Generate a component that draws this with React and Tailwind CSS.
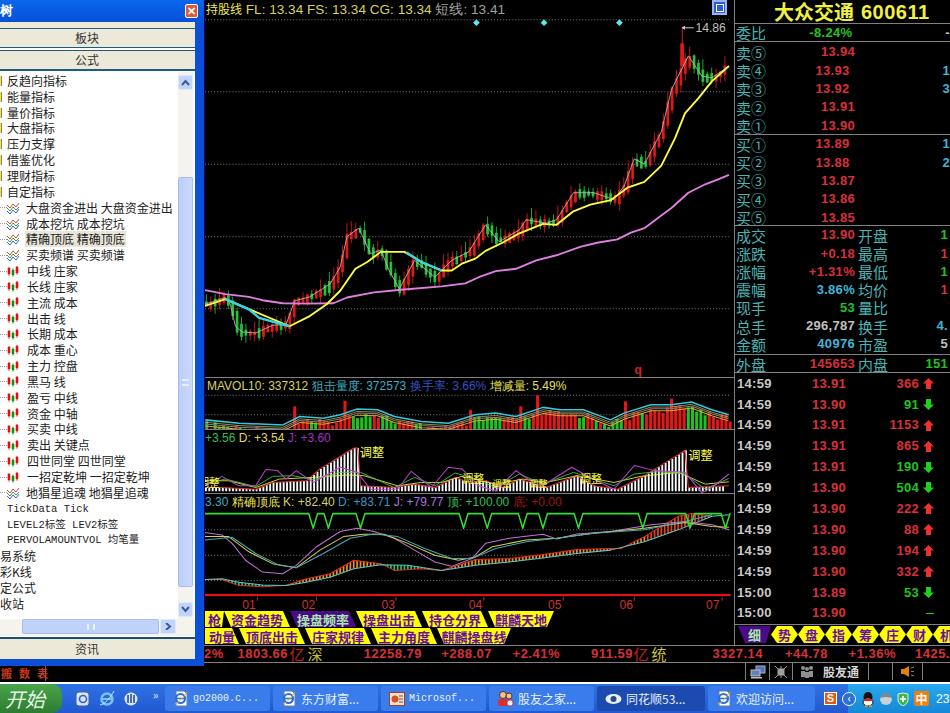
import React from "react";

const rnd = (i) => {
    const v = Math.sin(i * 12.9898) * 43758.5453;
    return v - Math.floor(v);
};

const at = (pts, x) => {
    if (x <= pts[0][0]) return pts[0][1];
    for (let i = 1; i < pts.length; i++) {
        if (x <= pts[i][0]) {
            const [x0, y0] = pts[i - 1];
            const [x1, y1] = pts[i];
            return y0 + ((y1 - y0) * (x - x0)) / (x1 - x0);
        }
    }
    return pts[pts.length - 1][1];
};

const str = (pts) => pts.map((p) => p.join(",")).join(" ");

const Line = ({ pts, color, w = 3 }) => <polyline points={str(pts)} fill="none" stroke={color} strokeWidth={w} strokeLinejoin="round" />;

const Dotted = ({ y }) => <line x1="0" x2="1555" y1={y} y2={y} stroke="#777" strokeWidth="3" strokeDasharray="3 6" />;

// chart coords are the zoomed crop, about 2.96x the real pixels
const whiteLine = [[0, 900], [60, 880], [75, 900], [90, 965], [110, 982], [150, 985], [200, 962], [240, 960], [265, 890], [310, 878], [370, 840], [400, 790], [420, 700], [455, 675], [490, 750], [520, 740], [545, 800], [575, 855], [620, 770], [680, 820], [730, 770], [780, 745], [830, 665], [870, 715], [930, 680], [950, 650], [1010, 660], [1040, 650], [1090, 570], [1150, 570], [1210, 590], [1240, 550], [1270, 470], [1300, 485], [1350, 390], [1380, 265], [1430, 165], [1470, 225], [1500, 230], [1550, 195]];
const yellowLine = [[0, 905], [60, 885], [250, 965], [310, 935], [360, 900], [400, 860], [445, 795], [480, 775], [520, 745], [590, 745], [640, 775], [700, 800], [730, 800], [760, 780], [800, 765], [830, 742], [880, 718], [930, 690], [1000, 662], [1040, 665], [1090, 625], [1140, 605], [1200, 592], [1250, 555], [1300, 538], [1350, 490], [1390, 410], [1420, 335], [1460, 290], [1500, 240], [1550, 195]];
const pinkLine = [[0, 858], [60, 870], [130, 878], [170, 888], [230, 897], [300, 898], [380, 897], [420, 880], [500, 865], [580, 857], [700, 847], [770, 838], [810, 820], [860, 802], [920, 795], [980, 770], [1040, 755], [1110, 730], [1160, 718], [1220, 708], [1260, 688], [1300, 675], [1340, 645], [1380, 615], [1430, 570], [1480, 545], [1520, 530], [1550, 517]];
const cyanA = [[60, 885], [130, 915], [160, 940], [250, 965]];
const cyanB = [[595, 746], [640, 775], [700, 800]];

const candles = Array.from({ length: 119 }, (_, i) => {
    const x = 4 + i * 13;
    const y = at(whiteLine, x);
    const prev = at(whiteLine, x - 13);
    const up = prev - y + (rnd(i) - 0.5) * 26 > 0;
    const top = Math.min(y, prev) - rnd(i + 200) * 12;
    const bottom = Math.max(y, prev) + 4 + rnd(i + 400) * 14;
    const hi = top - rnd(i + 600) * 32;
    const lo = bottom + rnd(i + 800) * 22;
    return { x, up, top, bottom, hi, lo };
});

const MainChart = () => (
    <svg className="absolute inset-0" width="530" height="377" viewBox="0 0 1568 1115">
        {[58, 271, 486, 700, 913].map((y) => <Dotted key={y} y={y} />)}
        {[803, 1003, 1226].map((x) => <polygon key={x} points={`${x},57 ${x + 10},67 ${x},77 ${x - 10},67`} fill="#5fe6ee" />)}
        {candles.map((c) => (
            <g key={c.x} fill={c.up ? "#e01818" : "#22c23a"} stroke={c.up ? "#e01818" : "#22c23a"}>
                <line x1={c.x} x2={c.x} y1={c.hi} y2={c.lo} strokeWidth="2.5" />
                <rect x={c.x - 4} y={c.top} width="8" height={c.bottom - c.top} stroke="none" />
            </g>
        ))}
        <line x1="1412" x2="1412" y1="85" y2="190" stroke="#e01818" strokeWidth="3" />
        <rect x="1406" y="128" width="11" height="68" fill="#e01818" />
        <Line pts={whiteLine} color="#b8b8b8" w={2.5} />
        <Line pts={pinkLine} color="#e080e0" w={5.5} />
        <Line pts={yellowLine} color="#ffff40" w={5.5} />
        <Line pts={cyanA} color="#35d5e5" w={7} />
        <Line pts={cyanB} color="#35d5e5" w={7} />
        <polyline points="1412,82 1446,82" stroke="#c8c8c8" strokeWidth="3" fill="none" />
        <polygon points="1409,82 1420,76 1420,88" fill="#c8c8c8" />
        <text x="1451" y="95" fontSize="36" fill="#c0c0c0" fontFamily="Liberation Sans, sans-serif">14.86</text>
        <text x="1270" y="1105" fontSize="38" fontWeight="700" fill="#d02020" fontFamily="Liberation Mono, monospace">q</text>
    </svg>
);

const volEnv = [[0, 145], [100, 155], [230, 160], [280, 135], [350, 140], [400, 130], [450, 113], [510, 115], [560, 135], [640, 150], [720, 155], [800, 130], [860, 125], [920, 135], [1000, 108], [1050, 115], [1120, 115], [1200, 145], [1240, 125], [1320, 100], [1380, 100], [1440, 92], [1500, 115], [1550, 130]];
const volTall = { 260: 105, 412: 88, 985: 72, 935: 105, 787: 115, 1235: 90, 1375: 82 };
const greenZones = [[0, 70], [95, 130], [300, 325], [415, 490], [510, 560], [610, 640], [790, 870], [935, 960], [1100, 1120], [1145, 1230], [1280, 1300], [1425, 1500]];

const volBars = Array.from({ length: 126 }, (_, i) => {
    const x = i * 12.4;
    const near = Object.keys(volTall).find((k) => Math.abs(k - x) < 6.2);
    const top = near ? volTall[near] : at(volEnv, x) + 4 + rnd(i) * 22;
    const green = greenZones.some(([a, b]) => x >= a && x <= b) && rnd(i + 50) > 0.15;
    return { x, top, green };
});

const VolChart = () => (
    <svg className="absolute inset-0" width="530" height="52" viewBox="0 21 1568 154">
        <Dotted y={72} />
        <Dotted y={130} />
        {volBars.map((b) => <rect key={b.x} x={b.x} y={b.top} width="9" height={175 - b.top} fill={b.green ? "#20c020" : "#e01818"} />)}
        <Line pts={volEnv.map(([x, y]) => [x, y + 12])} color="#808080" w={3} />
        <Line pts={volEnv.map(([x, y]) => [x, y + 18])} color="#e8a030" w={3} />
        <Line pts={volEnv.map(([x, y]) => [x, y + 7])} color="#d8d060" w={2} />
        <Line pts={volEnv} color="#35c5e5" w={4.5} />
    </svg>
);

const kdjEnv = [[0, 345], [50, 345], [150, 350], [200, 330], [300, 325], [340, 290], [440, 228], [452, 228], [460, 340], [560, 345], [620, 335], [680, 345], [740, 315], [780, 330], [830, 325], [880, 345], [930, 320], [1010, 345], [1100, 310], [1150, 340], [1220, 350], [1300, 310], [1420, 235], [1430, 345], [1550, 340]];
const kdjPink = [[0, 340], [50, 312], [100, 340], [150, 340], [180, 292], [215, 295], [240, 320], [270, 295], [320, 330], [400, 285], [450, 300], [490, 350], [570, 350], [610, 297], [670, 345], [720, 285], [760, 290], [810, 340], [860, 355], [920, 295], [990, 345], [1085, 285], [1130, 310], [1210, 350], [1270, 280], [1330, 295], [1420, 300], [1470, 360], [1500, 345], [1550, 305]];
const kdjGreen = [[0, 335], [60, 320], [150, 342], [200, 312], [260, 310], [320, 322], [400, 300], [460, 300], [560, 345], [620, 315], [680, 340], [740, 302], [800, 320], [860, 345], [930, 305], [1000, 335], [1090, 300], [1210, 340], [1270, 305], [1340, 298], [1420, 305], [1480, 350], [1550, 318]];
const kdjYellow = [[0, 325], [70, 325], [150, 345], [220, 320], [320, 315], [420, 308], [470, 310], [570, 340], [640, 330], [700, 330], [760, 312], [860, 335], [940, 320], [1010, 330], [1100, 310], [1210, 330], [1290, 312], [1400, 300], [1480, 335], [1550, 328]];

const KdjChart = () => (
    <svg className="absolute inset-0" width="530" height="64" viewBox="0 175 1568 189">
        {Array.from({ length: 154 }, (_, i) => {
            const x = i * 10;
            const top = at(kdjEnv, x);
            return <rect key={x} x={x} y={top} width="5.5" height={356 - top} fill="#fff" />;
        })}
        <Line pts={kdjEnv} color="#e03030" w={3} />
        <Line pts={kdjYellow} color="#f0f040" w={2.5} />
        <Line pts={kdjGreen} color="#40d040" w={2.5} />
        <Line pts={kdjPink} color="#c040d0" w={3} />
        <g fontFamily="Noto Sans CJK SC, sans-serif" fill="#ffff40">
            <text x="458" y="255" fontSize="36">调整</text>
            <text x="1430" y="264" fontSize="36">调整</text>
            <text x="762" y="332" fontSize="32">调整</text>
            <text x="850" y="344" fontSize="28">调整</text>
            <text x="958" y="342" fontSize="28">调整</text>
            <text x="1110" y="332" fontSize="32">调整</text>
            <text x="-20" y="344" fontSize="32">调整</text>
        </g>
    </svg>
);

const vs = [320, 365, 460, 765, 835, 940, 1000, 1105, 1295, 1435, 1540];
const greenTop = [[0, 422]];
vs.forEach((x) => greenTop.push([x - 13, 422], [x, 465], [x + 13, 422]));
greenTop.push([1555, 422]);

const jLine = [[0, 478], [50, 485], [80, 510], [120, 560], [170, 595], [230, 600], [270, 575], [330, 520], [400, 475], [450, 465], [500, 475], [560, 495], [620, 530], [680, 565], [730, 578], [790, 555], [830, 510], [900, 495], [1000, 483], [1040, 497], [1100, 482], [1200, 475], [1320, 455], [1420, 445], [1500, 455], [1550, 470]];
const kLine = [[0, 490], [70, 490], [130, 535], [200, 570], [270, 582], [340, 530], [410, 490], [470, 483], [530, 483], [600, 510], [680, 545], [750, 560], [800, 550], [850, 520], [950, 500], [1040, 495], [1150, 480], [1300, 465], [1420, 448], [1500, 460], [1550, 462]];
const dLine = [[0, 500], [80, 492], [150, 540], [220, 575], [270, 582], [350, 540], [430, 495], [500, 482], [570, 490], [650, 525], [730, 555], [790, 555], [860, 525], [950, 505], [1040, 495], [1150, 480], [1300, 470], [1420, 445], [1500, 425]];
const baseLine = [[0, 617], [50, 615], [100, 625], [170, 633], [240, 635], [300, 625], [370, 610], [440, 585], [520, 573], [600, 575], [700, 590], [800, 575], [900, 565], [1000, 553], [1100, 540], [1200, 530], [1300, 505], [1400, 470], [1500, 430], [1550, 425]];
const redLine = [[0, 617], [50, 617], [100, 635], [170, 638], [240, 634], [300, 615], [370, 600], [440, 560], [520, 570], [560, 590], [640, 585], [700, 590], [800, 558], [900, 555], [1000, 543], [1100, 528], [1200, 525], [1230, 525], [1300, 490], [1400, 430], [1440, 422], [1500, 430]];
const isGreen = (x) => (x > 70 && x < 220) || (x > 535 && x < 630);

const dates = [["01", 130, 155], ["02", 306, 330], ["03", 542, 565], ["04", 800, 825], ["05", 1035, 1060], ["06", 1246, 1270], ["07", 1502, 1530]];

const TopChart = () => (
    <svg className="absolute inset-0" width="530" height="118" viewBox="0 364 1568 349">
        <Dotted y={470} />
        <Dotted y={545} />
        <Dotted y={620} />
        {Array.from({ length: 150 }, (_, i) => {
            const x = i * 10;
            const a = at(redLine, x);
            const b = at(baseLine, x);
            return <line key={x} x1={x} x2={x} y1={a} y2={b} stroke={isGreen(x) ? "#30c060" : x > 1300 ? "#e84020" : "#f09020"} strokeWidth="5" />;
        })}
        <Line pts={redLine} color="#e03020" w={3} />
        <Line pts={baseLine} color="#58c8c8" w={3} />
        <Line pts={jLine} color="#c070d0" w={3} />
        <Line pts={kLine} color="#d8d050" w={3} />
        <Line pts={dLine} color="#40a8b8" w={3} />
        <Line pts={greenTop} color="#30e030" w={4.5} />
        <rect x="0" y="660" width="1555" height="6" fill="#f01010" />
        {dates.map(([label, x, tick]) => (
            <g key={label}>
                <line x1={tick} x2={tick} y1="668" y2="680" stroke="#a03030" strokeWidth="3" />
                <text x={x - 20} y="703" fontSize="36" fill="#d03030" fontFamily="Liberation Sans, sans-serif">{label}</text>
            </g>
        ))}
    </svg>
);

const CandleIcon = () => (
    <svg width="12" height="11" viewBox="0 0 12 11" className="shrink-0 mr-[7px]">
        <path d="M1 2h2v6H1zM2 1v9" fill="#e01010" stroke="#e01010" strokeWidth="0.6" />
        <path d="M5 4h2v5H5zM6 2v9" fill="#109010" stroke="#109010" strokeWidth="0.6" />
        <path d="M9 1h2v6H9zM10 0v9" fill="#e01010" stroke="#e01010" strokeWidth="0.6" />
    </svg>
);

const LineIcon = () => (
    <svg width="13" height="12" viewBox="0 0 13 12" fill="none" className="shrink-0 mr-[5px]" strokeWidth="1">
        <path d="M0 3l3 3 3-4 3 3 3-4" stroke="#e04040" />
        <path d="M0 6l3 3 3-4 3 3 3-3" stroke="#40a040" />
        <path d="M0 9l3 3 3-4 3 3 3-4" stroke="#4060e0" />
    </svg>
);

const treeRows = [
    { t: "反趋向指标", k: "f" }, { t: "能量指标", k: "f" }, { t: "量价指标", k: "f" }, { t: "大盘指标", k: "f" },
    { t: "压力支撑", k: "f" }, { t: "借鉴优化", k: "f" }, { t: "理财指标", k: "f" }, { t: "自定指标", k: "f" },
    { t: "大盘资金进出 大盘资金进出", k: "l" }, { t: "成本挖坑 成本挖坑", k: "l" }, { t: "精确顶底 精确顶底", k: "l", sel: true }, { t: "买卖频谱 买卖频谱", k: "l" },
    { t: "中线 庄家", k: "c" }, { t: "长线 庄家", k: "c" }, { t: "主流 成本", k: "c" }, { t: "出击 线", k: "c" },
    { t: "长期 成本", k: "c" }, { t: "成本 重心", k: "c" }, { t: "主力 控盘", k: "c" }, { t: "黑马 线", k: "c" },
    { t: "盈亏 中线", k: "c" }, { t: "资金 中轴", k: "c" }, { t: "买卖 中线", k: "c" }, { t: "卖出 关键点", k: "c" },
    { t: "四世同堂 四世同堂", k: "c" }, { t: "一招定乾坤 一招定乾坤", k: "c" }, { t: "地猖星追魂 地猖星追魂", k: "l" },
    { t: "TickData Tick", k: "t" }, { t: "LEVEL2标签 LEV2标签", k: "t" }, { t: "PERVOLAMOUNTVOL 均笔量", k: "t" },
    { t: "易系统", k: "r" }, { t: "彩K线", k: "r" }, { t: "定公式", k: "r" }, { t: "收站", k: "r" },
];

const TreeRow = ({ row }) => {
    if (row.k === "r") return <div className="h-[15.85px] leading-[16px] whitespace-pre">{row.t}</div>;
    if (row.k === "t") return <div className="h-[15.85px] leading-[16px] pl-[7px] whitespace-pre font-['Liberation_Mono','Noto_Sans_CJK_SC',monospace] text-[10.5px]">{row.t}</div>;
    if (row.k === "f") {
        return (
            <div className="h-[15.85px] leading-[16px] flex items-center whitespace-pre">
                <span className="w-[2px] h-[10px] bg-[#e8d890] border-r border-[#a08820] shrink-0" />
                <span className="ml-[5px]">{row.t}</span>
            </div>
        );
    }
    return (
        <div className="h-[15.85px] leading-[16px] flex items-center whitespace-pre">
            <span className="w-[7px] border-t border-dotted border-[#999] shrink-0" />
            {row.k === "c" ? <CandleIcon /> : <LineIcon />}
            <span className={row.sel ? "px-[1px] bg-[#e8e6d8]" : "px-[1px]"}>{row.t}</span>
        </div>
    );
};

const ArrowBtn = ({ d, className }) => (
    <div className={`bg-[#c3d4fb] rounded-[2px] border border-[#dfe8fc] flex items-center justify-center ${className}`}>
        <svg width="9" height="7" viewBox="0 0 9 7" fill="none" stroke="#3a5a98" strokeWidth="2">
            <path d={d} />
        </svg>
    </div>
);

const Sidebar = () => (
    <div className="w-[204px] shrink-0 flex flex-col">
        <div className="h-[666px] bg-[#0b4fd6] pr-[9px] pb-[8px] flex flex-col overflow-hidden">
            <div className="h-[22px] -mr-[9px] shrink-0 bg-gradient-to-b from-[#0a66ee] to-[#0650d8] flex items-center justify-between pr-[6px] text-white font-bold text-[13px]">
                <span>树</span>
                <span className="w-[13px] h-[14px] bg-[#dc5a36] border border-white rounded-[2px] text-[11px] leading-[11px] text-center text-white">✕</span>
            </div>
            <div className="flex-1 bg-white flex flex-col text-[12px] text-[#222] font-['Noto_Sans_CJK_SC',sans-serif]">
                <div className="h-[6px] bg-[#ece9d8]" />
                <div className="h-[20px] mb-[2px] bg-[#ece9d8] border-b border-[#1f5a80] border-t border-t-[#1f5a80] text-center pr-[21px] leading-[18px] text-[#333]">板块</div>
                <div className="h-[21px] mb-[1px] bg-[#ece9d8] border-b-2 border-[#1f5a80] border-t border-t-[#1f5a80] text-center pr-[21px] leading-[17px] text-[#333]">公式</div>
                <div className="h-[547px] flex overflow-hidden">
                    <div className="w-[178px] pt-[1px] overflow-hidden">
                        {treeRows.map((row) => <TreeRow key={row.t} row={row} />)}
                    </div>
                    <div className="w-[15px] bg-[#f4f3ee] flex flex-col pt-[3px]">
                        <ArrowBtn d="M1 6l3.5-4L8 6" className="h-[15px]" />
                        <div className="h-[87px]" />
                        <div className="h-[410px] bg-gradient-to-r from-[#bccffa] to-[#c9d9fc] border border-[#a8bde8] rounded-[2px] flex items-center justify-center">
                            <span className="w-[7px] h-[7px] border-y-2 border-[#e8eefc]" />
                        </div>
                        <div className="h-[15px]" />
                        <ArrowBtn d="M1 1l3.5 4L8 1" className="h-[15px]" />
                    </div>
                </div>
                <div className="h-[17px] flex bg-[#f4f3ee] pl-[22px]">
                    <div className="w-[137px] h-[15px] bg-[#c0d1fa] border border-[#a8bde8] rounded-[2px] flex items-center justify-center">
                        <span className="w-[8px] h-[6px] border-x-2 border-[#e8eefc]" />
                    </div>
                    <ArrowBtn d="M2 0l4 3.5L2 7" className="w-[16px] h-[15px] ml-[1px]" />
                </div>
                <div className="h-[1px] bg-white" />
                <div className="flex-1 bg-[#ece9d8] border-t-2 border-[#1f4f70] text-center pr-[21px] leading-[20px] text-[#333]">资讯</div>
            </div>
        </div>
        <div className="flex-1 flex bg-black">
            <div className="w-[46px] h-[15px] border-r border-[#666] flex gap-[7px] pl-[1px] text-[11px] leading-[14px] font-bold text-[#c83818] font-['Noto_Sans_CJK_SC',sans-serif]">
                <span>搬</span><span>数</span><span>表</span>
            </div>
        </div>
    </div>
);

const Tab = ({ text, w, shape, sel }) => (
    <div className={`${w} h-full shrink-0 flex items-center justify-center font-bold text-[13px] leading-none ${sel ? "bg-[#4a0a8a] text-[#a8e8a8]" : "bg-[#ffff00] text-[#6a10a0]"} ${shape}`}>{text}</div>
);

const slant = "[clip-path:polygon(0_0,calc(100%_-_7px)_0,100%_100%,7px_100%)]";
const slantEnd = "[clip-path:polygon(0_0,100%_0,calc(100%_-_7px)_100%,7px_100%)]";
const hex = "[clip-path:polygon(6px_0,calc(100%_-_6px)_0,100%_50%,calc(100%_-_6px)_100%,6px_100%,0_50%)]";

const ChartColumn = () => (
    <div className="w-[530px] shrink-0 flex flex-col border-l border-[#000080] font-['Liberation_Sans',sans-serif] text-[12px]">
        <div className="relative h-[377px] overflow-hidden">
            <MainChart />
            <div className="relative whitespace-pre leading-[18px] text-[#d8d060] text-[13.6px] pl-[1px]">
                <span className="text-[#f0e850] text-[12px] font-['Noto_Sans_CJK_SC',sans-serif]">持股线</span> FL: 13.34 FS: 13.34 CG: 13.34 <span className="text-[#a0a0a0]">短线: 13.41</span>
            </div>
            <div className="absolute right-[7px] top-0 w-[15px] h-[15px] bg-[#2c5cd8] border-2 border-[#9ab4ec] flex items-center justify-center">
                <span className="w-[8px] h-[8px] border border-white" />
            </div>
        </div>
        <div className="relative h-[52px] border-t border-[#808080] overflow-hidden">
            <VolChart />
            <div className="relative whitespace-pre leading-[14px] pt-[1px] pl-[2px] text-[#d8d060]">
                MAVOL10: 337312 <span className="text-[#3ab0c8]">狙击量度: 372573</span> <span className="text-[#3850c0]">换手率: 3.66%</span> <span className="text-[#e8e050]">增减量: 5.49%</span>
            </div>
        </div>
        <div className="relative h-[64px] border-t border-[#808080] overflow-hidden">
            <KdjChart />
            <div className="relative whitespace-pre leading-[14px] pt-[1px]">
                <span className="text-[#30c050]">+3.56</span> <span className="text-[#e0d850]">D: +3.54</span> <span className="text-[#a030c0]">J: +3.60</span>
            </div>
        </div>
        <div className="relative h-[118px] border-t border-[#808080] overflow-hidden">
            <TopChart />
            <div className="relative whitespace-pre leading-[14px] pt-[1px]">
                <span className="text-[#3ab0c8]">3.30</span> <span className="text-[#e8e050]">精确顶底</span> <span className="text-[#d8d060]">K: +82.40</span> <span className="text-[#3a98c8]">D: +83.71</span> <span className="text-[#b070e0]">J: +79.77</span> <span className="text-[#30c050]">顶: +100.00</span> <span className="text-[#a01010]">底: +0.00</span>
            </div>
        </div>
        <div className="h-[16px] flex overflow-hidden font-['Noto_Sans_CJK_SC',sans-serif]">
            <Tab text="枪" w="w-[19px]" shape="[clip-path:polygon(0_0,100%_0,calc(100%_-_2px)_100%,0_100%)]" />
            <Tab text="资金趋势" w="w-[66px]" shape={slant} />
            <Tab text="操盘频率" w="w-[66px]" shape={slant} sel />
            <Tab text="操盘出击" w="w-[66px]" shape={slant} />
            <Tab text="持仓分界" w="w-[66px]" shape={slant} />
            <Tab text="麒麟天地" w="w-[66px]" shape={slantEnd} />
        </div>
        <div className="h-[18px] pt-[1px] pb-[1px] flex overflow-hidden font-['Noto_Sans_CJK_SC',sans-serif]">
            <Tab text="动量" w="w-[34px]" shape="[clip-path:polygon(0_0,calc(100%_-_7px)_0,100%_100%,0_100%)]" />
            <Tab text="顶底出击" w="w-[66px]" shape={slant} />
            <Tab text="庄家规律" w="w-[66px]" shape={slant} />
            <Tab text="主力角度" w="w-[66px]" shape={slant} />
            <Tab text="麒麟操盘线" w="w-[74px]" shape={slantEnd} />
        </div>
    </div>
);

const cjkLabel = "font-['Noto_Sans_CJK_SC',sans-serif] font-normal tracking-normal text-[15px] text-[#48b4b4] w-[32px] shrink-0 leading-none";
const red = "text-[#d8303a]";
const green = "text-[#22c222]";
const cyan = "text-[#3ab8d8]";
const numCls = "font-['Liberation_Sans',sans-serif] font-bold text-[13px] tracking-[0.3px]";

const BookRow = ({ label, price, vol }) => (
    <div className={`h-[18.3px] flex items-center pl-[1px] whitespace-nowrap ${numCls}`}>
        <span className={cjkLabel}>{label}</span>
        <span className={`w-[87px] text-right ${red}`}>{price}</span>
        <span className={`ml-[93px] ${cyan}`}>{vol}</span>
    </div>
);

const InfoRow = ({ a, v, vc, b, r, rc }) => (
    <div className={`h-[18.2px] flex items-center pl-[1px] whitespace-nowrap ${numCls}`}>
        <span className={cjkLabel}>{a}</span>
        <span className={`w-[87px] text-right ${vc}`}>{v}</span>
        <span className={`${cjkLabel} ml-[3px]`}>{b}</span>
        <span className={`flex-1 text-right pr-[2px] ${rc}`}>{r}</span>
    </div>
);

const Arrow = ({ up }) => (
    <svg width="11" height="11" viewBox="0 0 11 11" className="ml-[4px]" fill={up ? "#f03030" : "#20d020"}>
        <polygon points={up ? "5.5,0 11,5.5 8,5.5 8,11 3,11 3,5.5 0,5.5" : "3,0 8,0 8,5.5 11,5.5 5.5,11 0,5.5 3,5.5"} />
    </svg>
);

const ticks = [
    ["14:59", "13.91", "366", 1], ["14:59", "13.90", "91", 0], ["14:59", "13.91", "1153", 1], ["14:59", "13.91", "865", 1],
    ["14:59", "13.91", "190", 0], ["14:59", "13.90", "504", 0], ["14:59", "13.90", "222", 1], ["14:59", "13.90", "88", 1],
    ["14:59", "13.90", "194", 1], ["14:59", "13.90", "332", 1], ["15:00", "13.89", "53", 0], ["15:00", "13.90", "", 2],
];

const bottomTabs = ["势", "盘", "指", "筹", "庄", "财", "机"];

const QuotePanel = () => (
    <div className="w-[216px] shrink-0 flex flex-col border-l border-[#808080] overflow-hidden">
        <div className="h-[23px] pl-[40px] flex items-center whitespace-nowrap text-[#f0f040] text-[20px] font-bold font-['Noto_Sans_CJK_SC',sans-serif] leading-none -ml-[1px]">
            大众交通<span className="ml-[7px] font-['Liberation_Sans',sans-serif] tracking-[0.5px]">600611</span>
        </div>
        <div className={`h-[19px] border-y border-[#808080] flex items-center pl-[1px] whitespace-nowrap ${numCls}`}>
            <span className={cjkLabel}>委比</span>
            <span className={`w-[87px] text-right ${green}`}>-8.24%</span>
            <span className="ml-[93px] text-[#c0c0c0]">-</span>
        </div>
        <div className="h-[93px] border-b border-[#808080] pt-[1px]">
            <BookRow label="卖⑤" price="13.94" vol="" />
            <BookRow label="卖④" price="13.93" vol="1" />
            <BookRow label="卖③" price="13.92" vol="3" />
            <BookRow label="卖②" price="13.91" vol="" />
            <BookRow label="卖①" price="13.90" vol="" />
        </div>
        <div className="h-[91px] border-b border-[#808080]">
            <BookRow label="买①" price="13.89" vol="1" />
            <BookRow label="买②" price="13.88" vol="2" />
            <BookRow label="买③" price="13.87" vol="" />
            <BookRow label="买④" price="13.86" vol="" />
            <BookRow label="买⑤" price="13.85" vol="" />
        </div>
        <div className="h-[129px] border-b border-[#808080]">
            <InfoRow a="成交" v="13.90" vc={red} b="开盘" r="1" rc={green} />
            <InfoRow a="涨跌" v="+0.18" vc={red} b="最高" r="1" rc={red} />
            <InfoRow a="涨幅" v="+1.31%" vc={red} b="最低" r="1" rc={green} />
            <InfoRow a="震幅" v="3.86%" vc={cyan} b="均价" r="1" rc={red} />
            <InfoRow a="现手" v="53" vc={green} b="量比" r="" rc={red} />
            <InfoRow a="总手" v="296,787" vc="text-[#c0c0c0]" b="换手" r="4." rc={cyan} />
            <InfoRow a="金额" v="40976" vc={cyan} b="市盈" r="5" rc="text-[#c0c0c0]" />
        </div>
        <div className="h-[18px] border-b border-[#808080]">
            <InfoRow a="外盘" v="145653" vc={red} b="内盘" r="151" rc={green} />
        </div>
        <div className="h-[252px] border-b border-[#808080] flex flex-col">
            {ticks.map(([time, price, vol, dir], i) => (
                <div key={i} className={`h-[20.9px] flex items-center pl-[2px] whitespace-nowrap ${numCls}`}>
                    <span className="w-[75px] text-[#c8c8c8]">{time}</span>
                    <span className={`w-[40px] ${red}`}>{price}</span>
                    <span className={`w-[67px] text-right ${dir === 1 ? red : green}`}>{vol}</span>
                    {dir === 2 ? <span className="ml-[7px] w-[8px] h-[1px] bg-[#20d020]" /> : <Arrow up={dir === 1} />}
                </div>
            ))}
        </div>
        <div className="h-[19px] pt-[1px] pb-[1px] flex pl-[3px] font-['Noto_Sans_CJK_SC',sans-serif]">
            <Tab text="细" w="w-[33px]" shape="[clip-path:polygon(0_0,100%_0,calc(100%_-_5px)_100%,7px_100%)]" sel />
            {bottomTabs.map((t) => <Tab key={t} text={t} w="w-[27px]" shape={hex} />)}
        </div>
    </div>
);

const tickerCells = [
    { w: "w-[14px]", text: "2%", color: red },
    { w: "w-[70px]", text: "1803.66", color: red },
    { w: "w-[17px]", text: "亿", color: "text-[#c02020]", cjk: true },
    { w: "w-[18px]", text: "深", color: "text-[#c8c030]", cjk: true },
    { w: "w-[99px]", text: "12258.79", color: red },
    { w: "w-[70px]", text: "+288.07", color: red },
    { w: "w-[68px]", text: "+2.41%", color: red },
    { w: "w-[73px]", text: "911.59", color: red },
    { w: "w-[16px]", text: "亿", color: "text-[#c02020]", cjk: true },
    { w: "w-[18px]", text: "统", color: "text-[#c8c030]", cjk: true },
    { w: "w-[96px]", text: "3327.14", color: red },
    { w: "w-[65px]", text: "+44.78", color: red },
    { w: "w-[68px]", text: "+1.36%", color: red },
    { w: "w-[54px] pr-[-1px]", text: "1425.", color: red },
];

const Ticker = () => (
    <div className="h-[18px] flex items-center border-y border-[#808080] overflow-hidden whitespace-nowrap font-['Liberation_Sans',sans-serif] font-bold text-[13px] tracking-[0.5px]">
        {tickerCells.map((c, i) => (
            <span key={i} className={`${c.w} shrink-0 text-right ${c.color} ${c.cjk ? "font-['Noto_Sans_CJK_SC',sans-serif] font-normal text-[15px]" : ""}`}>
                {c.text}
            </span>
        ))}
    </div>
);

const StatusBar = () => (
    <div className="h-[17px] flex">
        <div className="w-[541px] shrink-0" />
        <div className="w-[25px] border-x border-[#808080] flex items-center justify-center">
            <svg width="16" height="14" viewBox="0 0 16 14">
                <rect x="6" y="1" width="9" height="7" fill="#5070c0" stroke="#b0b0b0" />
                <rect x="1" y="5" width="9" height="6" fill="#6080c0" stroke="#c0c0c0" />
                <rect x="1" y="12" width="11" height="1.5" fill="#c0c0c0" />
            </svg>
        </div>
        <div className="w-[23px] border-r border-[#808080] flex items-center justify-center">
            <svg width="14" height="14" viewBox="0 0 14 14" fill="none" stroke="#a0a0a0">
                <rect x="4" y="4" width="6" height="6" fill="#a0a0a0" />
                <path d="M1 1l3 3M13 1l-3 3M1 13l3-3M13 13l-3-3M7 1v3M7 10v3" />
            </svg>
        </div>
        <div className="w-[76px] border-r border-[#808080] flex items-center pl-[7px] gap-[9px]">
            <svg width="14" height="13" viewBox="0 0 14 13" fill="#909090">
                <circle cx="3" cy="3" r="2" /><circle cx="11" cy="3" r="2" /><circle cx="7" cy="4" r="2" />
                <rect x="1" y="6" width="4" height="6" /><rect x="9" y="6" width="4" height="6" /><rect x="5" y="7" width="4" height="6" />
            </svg>
            <span className="text-[12px] leading-none font-bold text-[#d8d8d8] font-['Noto_Sans_CJK_SC',sans-serif] whitespace-nowrap">股友通</span>
        </div>
        <div className="w-[24px] border-r border-[#808080]" />
        <div className="w-[30px] border-r border-[#808080] flex items-center justify-center">
            <svg width="14" height="13" viewBox="0 0 14 13">
                <path d="M0 4h3v5H0z" fill="#e08010" />
                <path d="M3 4l5-3v11L3 9z" fill="#e08010" />
                <path d="M10 3l3-1M10 6.5h3M10 10l3 1" stroke="#808080" />
            </svg>
        </div>
    </div>
);

const EIcon = () => (
    <svg width="16" height="17" viewBox="0 0 16 17" className="shrink-0">
        <path d="M3 1h8l3 3v12H3z" fill="#fff" stroke="#6a7a9a" />
        <circle cx="7.5" cy="8.5" r="4.5" fill="none" stroke="#2a70d8" strokeWidth="2.2" />
        <path d="M3 8.5h9" stroke="#2a70d8" strokeWidth="1.6" />
        <path d="M2 14C5 13 11 7 14 2" fill="none" stroke="#f0b020" strokeWidth="1" />
    </svg>
);

const TaskButton = ({ icon, label, mono, active, w = "w-[105px]" }) => (
    <div className={`${w} h-[25px] shrink-0 rounded-[3px] flex items-center pl-[8px] gap-[4px] text-[#e8f0ff] whitespace-pre ${active ? "bg-[#1c4bb0]" : "bg-[#3a7cec]"} ${mono ? "font-['Liberation_Mono',monospace] text-[10px]" : "font-['Noto_Sans_CJK_SC',sans-serif] text-[12px]"}`}>
        {icon}
        <span>{label}</span>
    </div>
);

const Taskbar = () => (
    <div className="h-[31px] border-t-2 border-white flex items-center bg-gradient-to-b from-[#2f72e4] to-[#2258d0] overflow-hidden">
        <div className="w-[62px] h-full shrink-0 rounded-r-[10px] bg-gradient-to-b from-[#4aa44a] to-[#2d7d30] pl-[5px] flex items-center text-[#e8f4e8] italic text-[20px] leading-none font-['Noto_Sans_CJK_SC',sans-serif]">开始</div>
        <div className="w-[103px] shrink-0 flex items-center pl-[13px] gap-[8px]">
            <svg width="16" height="16" viewBox="0 0 16 16">
                <rect x="1" y="1" width="13" height="14" rx="3" fill="#d8e4f8" stroke="#4060a0" />
                <circle cx="8" cy="8" r="3.5" fill="none" stroke="#3060c0" strokeWidth="1.6" />
            </svg>
            <svg width="16" height="17" viewBox="0 0 16 17">
                <circle cx="8" cy="9" r="5.5" fill="none" stroke="#7ac0f8" strokeWidth="2.6" />
                <path d="M3 9h10" stroke="#7ac0f8" strokeWidth="2" />
                <path d="M1 15C5 15 12 7 15 1" fill="none" stroke="#d8e8ff" strokeWidth="1" />
            </svg>
            <svg width="16" height="16" viewBox="0 0 16 16">
                <circle cx="8" cy="8" r="6.5" fill="#d8e8f8" />
                <path d="M5 4v8M8 3v9M11 4v8" stroke="#2050a0" strokeWidth="1.6" />
            </svg>
            <span className="text-[#c8dcf8] text-[11px] leading-none -mt-[8px] ml-[6px]">»</span>
        </div>
        <div className="flex gap-[3px]">
            <TaskButton icon={<EIcon />} label="go2000.c..." mono />
            <TaskButton icon={<EIcon />} label="东方财富..." />
            <TaskButton
                icon={(
                    <svg width="16" height="16" viewBox="0 0 16 16" className="shrink-0">
                        <rect x="0.5" y="1.5" width="15" height="13" fill="#f0e0d0" stroke="#a04020" />
                        <circle cx="6" cy="8" r="3.5" fill="#d85020" />
                        <path d="M10 5h4M10 8h4M10 11h4" stroke="#805040" />
                    </svg>
                )}
                label="Microsof..."
                mono
            />
            <TaskButton
                icon={(
                    <svg width="17" height="17" viewBox="0 0 17 17" className="shrink-0">
                        <circle cx="6" cy="5" r="3.5" fill="#f0c090" stroke="#603020" />
                        <circle cx="12" cy="6" r="3" fill="#f0c090" stroke="#603020" />
                        <rect x="1" y="9" width="10" height="7" rx="2" fill="#d83030" />
                        <rect x="10" y="10" width="6" height="6" rx="2" fill="#f0f0f0" stroke="#c03030" />
                    </svg>
                )}
                label="股友之家..."
            />
            <TaskButton
                icon={(
                    <svg width="17" height="12" viewBox="0 0 17 12" className="shrink-0">
                        <ellipse cx="8.5" cy="6" rx="8" ry="5" fill="#e8f0f8" />
                        <circle cx="8.5" cy="6" r="3" fill="#2a4a90" />
                    </svg>
                )}
                label="同花顺53..."
                active
                w="w-[108px]"
            />
            <TaskButton icon={<EIcon />} label="欢迎访问..." w="w-[107px]" />
        </div>
        <div className="ml-[9px] w-[24px] shrink-0 flex items-center">
            <span className="w-[13px] h-[13px] bg-[#e85a10] border border-white text-white text-[11px] font-bold leading-[11px] text-center font-['Liberation_Sans',sans-serif]">S</span>
        </div>
        <div className="flex-1 h-full bg-gradient-to-b from-[#28a8ee] to-[#1488d8] flex items-center gap-[5px] pl-[2px] whitespace-nowrap">
            <span className="w-[14px] h-[14px] rounded-full bg-[#2a70d8] border border-white text-white text-[10px] leading-[11px] text-center -ml-[8px]">‹</span>
            <svg width="14" height="16" viewBox="0 0 14 16">
                <ellipse cx="7" cy="6" rx="4.5" ry="5" fill="#111" />
                <ellipse cx="7" cy="11" rx="5" ry="4" fill="#f4f4f4" stroke="#111" />
                <path d="M3 9h8" stroke="#e02020" strokeWidth="2" />
                <path d="M4 15h3M8 15h3" stroke="#f0a020" strokeWidth="1.6" />
            </svg>
            <span className="w-[12px] h-[12px] rounded-full bg-[#c8d0d8] border-t-4 border-[#808890]" />
            <svg width="12" height="14" viewBox="0 0 12 14">
                <path d="M1 2l5-1 5 1v6c0 3-3 5-5 6-2-1-5-3-5-6z" fill="#40b850" stroke="#e0f0e0" />
                <path d="M6 4v6M3 7h6" stroke="#fff" strokeWidth="1.6" />
            </svg>
            <span className="w-[15px] h-[15px] bg-[#f08010] rounded-[2px] text-white text-[12px] font-bold leading-[15px] text-center font-['Noto_Sans_CJK_SC',sans-serif]">中</span>
            <span className="ml-[2px] text-white text-[12px] font-['Liberation_Sans',sans-serif]">23</span>
        </div>
    </div>
);

const App = () => (
    <div className="w-[950px] h-[713px] bg-black flex flex-col overflow-hidden">
        <div className="flex h-[682px]">
            <Sidebar />
            <div className="w-[746px] flex flex-col">
                <div className="flex h-[645px]">
                    <ChartColumn />
                    <QuotePanel />
                </div>
                <Ticker />
                <StatusBar />
            </div>
        </div>
        <Taskbar />
    </div>
);

export default App;
